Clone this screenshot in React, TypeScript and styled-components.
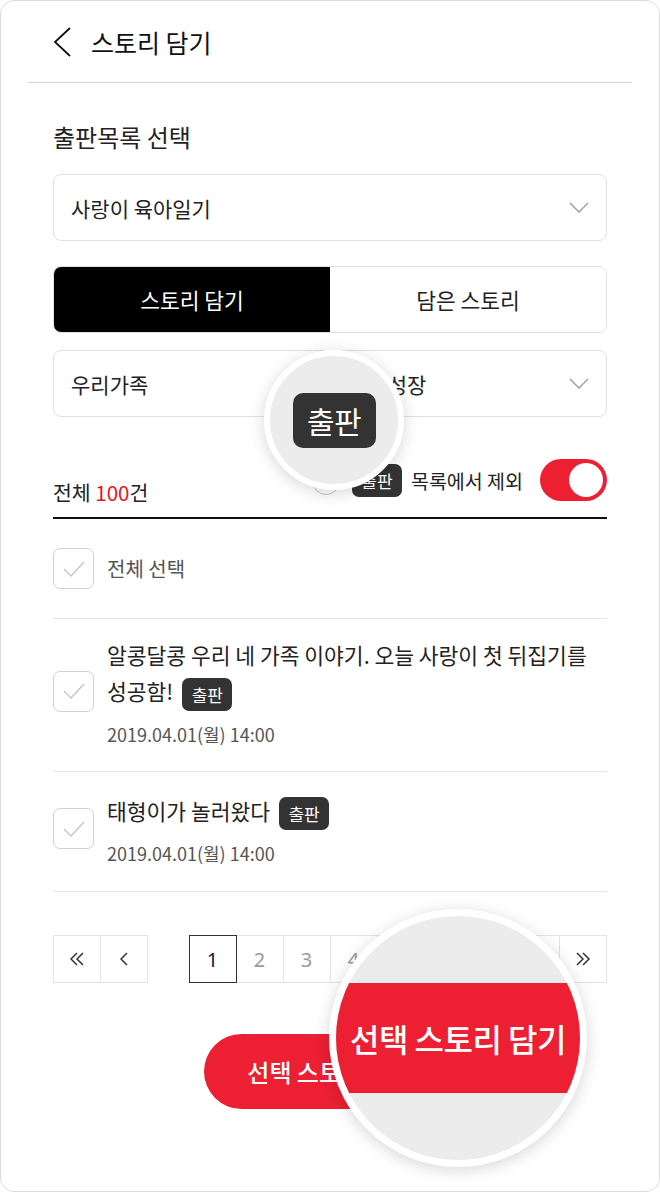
import React from "react";
import styled, { createGlobalStyle } from "styled-components";

const GlobalStyle = createGlobalStyle`
  * { box-sizing: border-box; }
  html, body { margin: 0; padding: 0; background: #fff; }
  body {
    font-family: "Noto Sans CJK KR", "Noto Sans", sans-serif;
    color: #222;
  }
`;

const RED = "#ed1f33";

const Frame = styled.div`
  position: relative;
  width: 660px;
  height: 1192px;
  border: 1px solid #dcdcdc;
  border-radius: 14px;
  overflow: hidden;
  background: #fff;
`;

const Header = styled.header`
  display: flex;
  align-items: center;
  height: 82px;
  margin: 0 27px;
  padding-left: 25px;
  border-bottom: 1px solid #d6d6d6;
`;

const BackIcon = styled.svg`
  width: 19px;
  height: 30px;
  margin-right: 19px;
  flex: none;
`;

const Title = styled.h1`
  margin: 0;
  font-size: 25px;
  font-weight: 400;
  color: #111;
  line-height: 32px;
`;

const Content = styled.main`
  padding: 0 52px;
`;

const Label = styled.div`
  margin-top: 37px;
  font-size: 24px;
  line-height: 34px;
  color: #222;
`;

const Select = styled.div<{ $mt?: number; $pad?: number }>`
  display: flex;
  align-items: center;
  justify-content: space-between;
  flex: 1;
  height: 67px;
  margin-top: ${(p) => p.$mt ?? 0}px;
  padding: 0 17px 0 ${(p) => p.$pad ?? 17}px;
  border: 1px solid #e0e0e0;
  border-radius: 8px;
  font-size: 21px;
  color: #222;
  background: #fff;
`;

const SelectRow = styled.div`
  display: flex;
  gap: 8px;
  margin-top: 17px;
`;

const Tabs = styled.div`
  display: flex;
  height: 67px;
  margin-top: 25px;
  border: 1px solid #e0e0e0;
  border-radius: 8px;
  overflow: hidden;
`;

const Tab = styled.div<{ $active?: boolean }>`
  flex: 1;
  display: flex;
  align-items: center;
  justify-content: center;
  font-size: 21.5px;
  background: ${(p) => (p.$active ? "#000" : "#fff")};
  color: ${(p) => (p.$active ? "#fff" : "#222")};
`;

const TotalRow = styled.div`
  display: flex;
  justify-content: space-between;
  align-items: center;
  padding: 42px 0 16px;
  border-bottom: 2px solid #111;
`;

const TotalText = styled.div`
  align-self: flex-end;
  margin-bottom: -6px;
  font-size: 20.5px;
  line-height: 30px;
  color: #222;
`;

const Red = styled.span`
  color: #e8141e;
`;

const RightGroup = styled.div`
  display: flex;
  align-items: center;
  height: 42px;
`;

const Radio = styled.span`
  width: 28px;
  height: 28px;
  border-radius: 50%;
  border: 1px solid #c4c4c4;
  margin-right: 12px;
  margin-top: 2px;
`;

const Badge = styled.span<{ $big?: boolean }>`
  display: inline-flex;
  align-items: center;
  justify-content: center;
  width: ${(p) => (p.$big ? 83 : 50)}px;
  height: ${(p) => (p.$big ? 55 : 33)}px;
  border-radius: ${(p) => (p.$big ? 10 : 7)}px;
  background: #333;
  color: #fff;
  font-size: ${(p) => (p.$big ? 30 : 17)}px;
  letter-spacing: ${(p) => (p.$big ? -0.5 : 0)}px;
  line-height: 1;
  vertical-align: middle;
`;

const ExcludeText = styled.span`
  margin: 0 17px 0 9px;
  font-size: 19.5px;
  color: #222;
`;

const Toggle = styled.span`
  position: relative;
  display: flex;
  align-items: center;
  justify-content: flex-end;
  width: 67px;
  height: 42px;
  padding: 4px;
  border-radius: 21px;
  background: ${RED};
`;

const Knob = styled.span`
  width: 34px;
  height: 34px;
  border-radius: 50%;
  background: #fff;
`;

const CheckRow = styled.div<{ $pt?: number; $pb?: number }>`
  display: flex;
  align-items: center;
  padding: ${(p) => p.$pt ?? 0}px 0 ${(p) => p.$pb ?? 0}px;
  border-bottom: 1px solid #e6e6e6;
`;

const CheckBox = styled.span`
  flex: none;
  display: flex;
  align-items: center;
  justify-content: center;
  width: 41px;
  height: 41px;
  margin-right: 13px;
  border: 1.5px solid #d0d0d0;
  border-radius: 7px;
  background: #fff;
`;

const AllText = styled.span`
  font-size: 20px;
  color: #555;
`;

const ItemBody = styled.div`
  flex: 1;
`;

const ItemTitle = styled.div`
  font-size: 21.5px;
  line-height: 36px;
  color: #222;
  word-break: keep-all;
  & > span {
    margin-left: 9px;
  }
`;

const ItemDate = styled.div`
  margin-top: 11px;
  font-size: 18px;
  line-height: 24px;
  color: #555;
`;

const Pager = styled.nav`
  display: flex;
  justify-content: space-between;
  margin-top: 43px;
`;

const PageGroup = styled.div`
  display: flex;
`;

const PageBtn = styled.span<{ $active?: boolean }>`
  position: relative;
  display: flex;
  align-items: center;
  justify-content: center;
  width: 48px;
  height: 48px;
  margin-left: -1px;
  &:first-child { margin-left: 0; }
  border: 1px solid ${(p) => (p.$active ? "#333" : "#e3e3e3")};
  z-index: ${(p) => (p.$active ? 1 : 0)};
  font-size: 20px;
  font-family: "Noto Sans", "Noto Sans CJK KR", sans-serif;
  color: ${(p) => (p.$active ? "#222" : "#9a9a9a")};
  background: #fff;
`;

const BottomBtn = styled.button`
  display: block;
  width: 252px;
  height: 75px;
  margin: 51px auto 0;
  border: none;
  border-radius: 38px;
  background: ${RED};
  color: #fff;
  font-family: inherit;
  font-size: 24px;
  font-weight: 500;
`;

const Magnifier = styled.div<{ $x: number; $y: number; $size: number; $ring: number }>`
  position: absolute;
  left: ${(p) => p.$x}px;
  top: ${(p) => p.$y}px;
  width: ${(p) => p.$size}px;
  height: ${(p) => p.$size}px;
  border-radius: 50%;
  border: ${(p) => p.$ring}px solid #fff;
  background: #ececec;
  box-shadow: 0 3px 16px rgba(0, 0, 0, 0.16);
  overflow: hidden;
  display: flex;
  align-items: center;
  justify-content: center;
  z-index: 5;
`;

const Band = styled.div`
  width: 100%;
  height: 110px;
  background: ${RED};
  color: #fff;
  display: flex;
  align-items: center;
  justify-content: center;
  font-size: 32px;
  font-weight: 500;
  letter-spacing: -0.5px;
`;

const Check = () => (
  <svg width="22" height="16" viewBox="0 0 22 16">
    <polyline points="1,8 8,15 21,1" fill="none" stroke="#c6c6c6" strokeWidth="1.4" />
  </svg>
);

const ChevronDown = () => (
  <svg width="20" height="12" viewBox="0 0 20 12">
    <polyline points="1,1 10,10 19,1" fill="none" stroke="#9a9a9a" strokeWidth="1.4" />
  </svg>
);

const Chev = ({ dir, double }: { dir: "l" | "r"; double?: boolean }) => {
  const l = dir === "l";
  const one = (o: number) =>
    l ? `${7 + o},1 ${1 + o},7 ${7 + o},13` : `${1 + o},1 ${7 + o},7 ${1 + o},13`;
  return (
    <svg width={double ? 15 : 9} height="14" viewBox={`0 0 ${double ? 15 : 9} 14`}>
      <polyline points={one(0)} fill="none" stroke="#333" strokeWidth="1.5" />
      {double && <polyline points={one(6)} fill="none" stroke="#333" strokeWidth="1.5" />}
    </svg>
  );
};

export default function App() {
  const pages = [1, 2, 3, 4, 5, 6];
  return (
    <>
      <GlobalStyle />
      <Frame>
        <Header>
          <BackIcon viewBox="0 0 19 30">
            <polyline points="17,1 2,15 17,29" fill="none" stroke="#111" strokeWidth="1.8" />
          </BackIcon>
          <Title>스토리 담기</Title>
        </Header>

        <Content>
          <Label>출판목록 선택</Label>
          <Select $mt={20}>
            <span>사랑이 육아일기</span>
            <ChevronDown />
          </Select>

          <Tabs>
            <Tab $active>스토리 담기</Tab>
            <Tab>담은 스토리</Tab>
          </Tabs>

          <SelectRow>
            <Select>
              <span>우리가족</span>
              <ChevronDown />
            </Select>
            <Select $pad={11}>
              <span>아이성장</span>
              <ChevronDown />
            </Select>
          </SelectRow>

          <TotalRow>
            <TotalText>
              전체 <Red>100</Red>건
            </TotalText>
            <RightGroup>
              <Radio />
              <Badge>출판</Badge>
              <ExcludeText>목록에서 제외</ExcludeText>
              <Toggle>
                <Knob />
              </Toggle>
            </RightGroup>
          </TotalRow>

          <CheckRow $pt={29} $pb={29}>
            <CheckBox>
              <Check />
            </CheckBox>
            <AllText>전체 선택</AllText>
          </CheckRow>

          <CheckRow $pt={18} $pb={25}>
            <CheckBox>
              <Check />
            </CheckBox>
            <ItemBody>
              <ItemTitle>
                알콩달콩 우리 네 가족 이야기. 오늘 사랑이 첫 뒤집기를 성공함!<Badge>출판</Badge>
              </ItemTitle>
              <ItemDate>2019.04.01(월) 14:00</ItemDate>
            </ItemBody>
          </CheckRow>

          <CheckRow $pt={21} $pb={26}>
            <CheckBox>
              <Check />
            </CheckBox>
            <ItemBody>
              <ItemTitle>
                태형이가 놀러왔다<Badge>출판</Badge>
              </ItemTitle>
              <ItemDate>2019.04.01(월) 14:00</ItemDate>
            </ItemBody>
          </CheckRow>

          <Pager>
            <PageGroup>
              <PageBtn><Chev dir="l" double /></PageBtn>
              <PageBtn><Chev dir="l" /></PageBtn>
            </PageGroup>
            <PageGroup>
              {pages.map((n) => (
                <PageBtn key={n} $active={n === 1}>{n}</PageBtn>
              ))}
            </PageGroup>
            <PageGroup>
              <PageBtn><Chev dir="r" /></PageBtn>
              <PageBtn><Chev dir="r" double /></PageBtn>
            </PageGroup>
          </Pager>

          <BottomBtn>선택 스토리 담기</BottomBtn>
        </Content>

        <Magnifier $x={263} $y={349} $size={140} $ring={6}>
          <Badge $big>출판</Badge>
        </Magnifier>
        <Magnifier $x={328} $y={908} $size={258} $ring={7}>
          <Band>선택 스토리 담기</Band>
        </Magnifier>
      </Frame>
    </>
  );
}
